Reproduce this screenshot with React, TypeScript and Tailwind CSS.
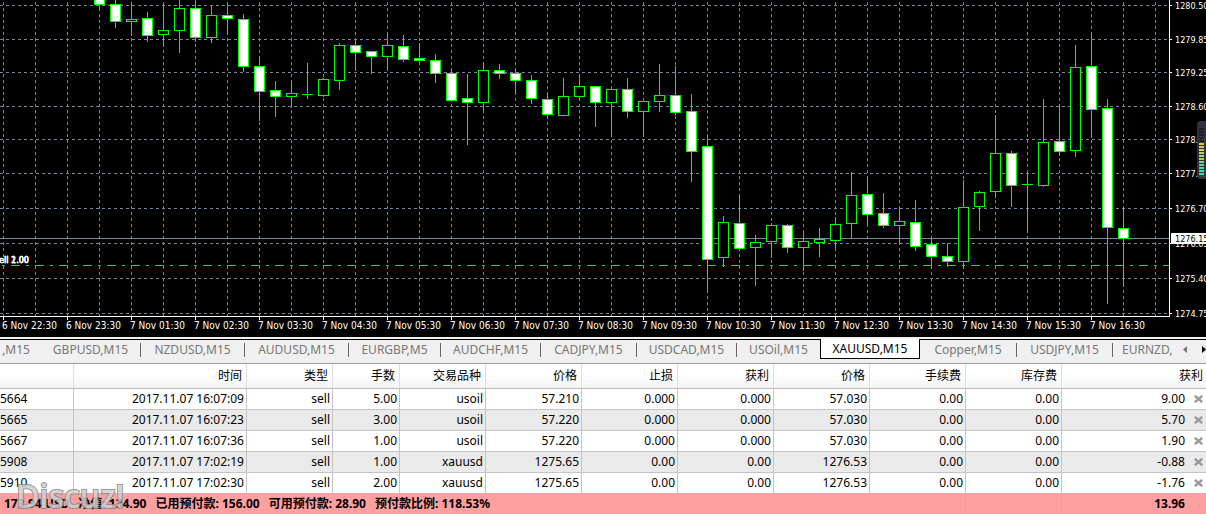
import { useState } from "react";
import clsx from "clsx";

// high, low, body top, body bottom, 1 = bear (filled)
const candles = [
  [-4, 10, -4, 5, 1],
  [-4, 28, 4, 22, 1],
  [2, 36, 19, 22, 0],
  [12, 42, 18, 36, 1],
  [3, 47, 30, 35, 0],
  [-4, 53, 8, 31, 0],
  [-4, 42, 8, 38, 1],
  [5, 43, 15, 38, 0],
  [3, 34, 15, 19, 1],
  [14, 72, 19, 67, 1],
  [56, 121, 66, 92, 1],
  [81, 117, 90, 97, 1],
  [82, 108, 93, 97, 0],
  [63, 99, 94, 95, 0],
  [78, 97, 79, 96, 0],
  [43, 90, 45, 81, 0],
  [40, 71, 45, 53, 1],
  [51, 74, 51, 57, 1],
  [32, 70, 45, 57, 0],
  [35, 62, 46, 60, 1],
  [43, 62, 58, 61, 1],
  [54, 83, 60, 74, 1],
  [69, 102, 73, 101, 1],
  [74, 145, 98, 103, 1],
  [63, 112, 70, 103, 0],
  [64, 79, 70, 74, 1],
  [69, 93, 73, 81, 1],
  [75, 104, 80, 99, 1],
  [93, 119, 99, 115, 1],
  [78, 116, 96, 116, 0],
  [75, 99, 86, 97, 0],
  [86, 127, 86, 103, 1],
  [89, 137, 89, 103, 0],
  [78, 118, 89, 112, 1],
  [101, 137, 101, 112, 0],
  [64, 112, 95, 102, 0],
  [66, 115, 95, 113, 1],
  [94, 182, 111, 152, 1],
  [136, 292, 146, 260, 1],
  [216, 267, 222, 258, 0],
  [195, 251, 223, 249, 1],
  [235, 286, 242, 248, 0],
  [223, 258, 225, 242, 0],
  [224, 253, 225, 248, 1],
  [233, 271, 241, 248, 0],
  [228, 257, 239, 243, 0],
  [217, 248, 224, 241, 0],
  [172, 239, 195, 224, 0],
  [177, 225, 194, 215, 1],
  [193, 228, 213, 226, 1],
  [208, 243, 221, 226, 0],
  [200, 251, 222, 247, 1],
  [238, 268, 244, 257, 1],
  [243, 267, 256, 262, 1],
  [180, 268, 207, 262, 0],
  [191, 231, 192, 207, 0],
  [115, 198, 153, 192, 0],
  [151, 207, 153, 186, 1],
  [173, 233, 184, 185, 0],
  [99, 187, 142, 186, 0],
  [104, 156, 141, 152, 1],
  [45, 157, 67, 151, 0],
  [33, 138, 66, 110, 1],
  [99, 304, 108, 228, 1],
  [208, 287, 228, 239, 1],
];

const prices = [
  { y: 5, label: "1280.50" },
  { y: 39, label: "1279.85" },
  { y: 72, label: "1279.25" },
  { y: 106, label: "1278.60" },
  { y: 139, label: "1278.00" },
  { y: 173, label: "1277.35" },
  { y: 208, label: "1276.70" },
  { y: 243, label: "1276.05" },
  { y: 278, label: "1275.40" },
  { y: 313, label: "1274.75" },
];

const times = [
  "6 Nov 22:30",
  "6 Nov 23:30",
  "7 Nov 01:30",
  "7 Nov 02:30",
  "7 Nov 03:30",
  "7 Nov 04:30",
  "7 Nov 05:30",
  "7 Nov 06:30",
  "7 Nov 07:30",
  "7 Nov 08:30",
  "7 Nov 09:30",
  "7 Nov 10:30",
  "7 Nov 11:30",
  "7 Nov 12:30",
  "7 Nov 13:30",
  "7 Nov 14:30",
  "7 Nov 15:30",
  "7 Nov 16:30",
];

const tabs = [
  { label: ",M15", width: "w-[41px]" },
  { label: "GBPUSD,M15", width: "w-[100px]" },
  { label: "NZDUSD,M15", width: "w-[104px]" },
  { label: "AUDUSD,M15", width: "w-[104px]" },
  { label: "EURGBP,M5", width: "w-[92px]" },
  { label: "AUDCHF,M15", width: "w-[100px]" },
  { label: "CADJPY,M15", width: "w-[96px]" },
  { label: "USDCAD,M15", width: "w-[100px]" },
  { label: "USOil,M15", width: "w-[83px]" },
  { label: "XAUUSD,M15", width: "w-[100px]" },
  { label: "Copper,M15", width: "w-[97px]" },
  { label: "USDJPY,M15", width: "w-[96px]" },
];

const columns = [
  { label: "", width: "w-[74px]" },
  { label: "时间", width: "w-[173px]" },
  { label: "类型", width: "w-[86px]" },
  { label: "手数", width: "w-[67px]" },
  { label: "交易品种", width: "w-[86px]" },
  { label: "价格", width: "w-[96px]" },
  { label: "止损", width: "w-[96px]" },
  { label: "获利", width: "w-[96px]" },
  { label: "价格", width: "w-[96px]" },
  { label: "手续费", width: "w-[96px]" },
  { label: "库存费", width: "w-[96px]" },
  { label: "获利", width: "w-auto" },
];

const orders = [
  ["5664", "2017.11.07 16:07:09", "sell", "5.00", "usoil", "57.210", "0.000", "0.000", "57.030", "0.00", "0.00", "9.00"],
  ["5665", "2017.11.07 16:07:23", "sell", "3.00", "usoil", "57.220", "0.000", "0.000", "57.030", "0.00", "0.00", "5.70"],
  ["5667", "2017.11.07 16:07:36", "sell", "1.00", "usoil", "57.220", "0.000", "0.000", "57.030", "0.00", "0.00", "1.90"],
  ["5908", "2017.11.07 17:02:19", "sell", "1.00", "xauusd", "1275.65", "0.00", "0.00", "1276.53", "0.00", "0.00", "-0.88"],
  ["5910", "2017.11.07 17:02:30", "sell", "2.00", "xauusd", "1275.65", "0.00", "0.00", "1276.53", "0.00", "0.00", "-1.76"],
];

const summary = [
  "173.94 USD",
  "净值: 134.90",
  "已用预付款: 156.00",
  "可用预付款: 28.90",
  "预付款比例: 118.53%",
];

const meter = [
  "bg-[#1c1e26]",
  "bg-[#1c1e26]",
  "bg-[#1c1e26]",
  "bg-[#1c1e26]",
  "bg-[#1c1e26]",
  "bg-[#e0c040]",
  "bg-[#dcc848]",
  "bg-[#d0d050]",
  "bg-[#c0d458]",
  "bg-[#a8d860]",
  "bg-[#90d870]",
  "bg-[#78d880]",
  "bg-[#60d890]",
  "bg-[#50d8a0]",
  "bg-[#44d8b0]",
  "bg-[#40d8b8]",
];

const Chart = () => (
  <svg
    className="block h-[337px] w-full bg-black font-['DejaVu_Sans_Condensed','Noto_Sans',sans-serif] text-[10px]"
    shapeRendering="crispEdges"
  >
    {/* grid */}
    <g stroke="#778899" strokeDasharray="3 3">
      {Array.from({ length: 37 }, (_, i) => (
        <line key={i} x1={3.5 + i * 32} x2={3.5 + i * 32} y1={2} y2={316} />
      ))}
      {prices.map(({ y }) => (
        <line key={y} x1={0} x2={1169} y1={y + 0.5} y2={y + 0.5} />
      ))}
    </g>
    <line x1={0} x2={1169} y1={238.5} y2={238.5} stroke="#778899" />
    <line x1={-13} x2={1169} y1={265.5} y2={265.5} stroke="#32cd32" strokeDasharray="9 6 3 6" />

    {candles.map(([high, low, top, bottom, bear], i) => {
      const x = 99 + i * 16;
      return (
        <g key={i} fill="#00ff00">
          <rect x={x} y={high} width={1} height={low - high} />
          <rect x={x - 5} y={top} width={11} height={bottom - top} />
          {bottom - top > 2 && (
            <rect
              x={x - 4}
              y={top + 1}
              width={9}
              height={bottom - top - 2}
              fill={bear ? "#ffffff" : "#000000"}
            />
          )}
        </g>
      );
    })}

    {/* axes */}
    <g fill="#ffffff">
      <rect x={1169} y={0} width={1} height={317} />
      <rect x={0} y={316} width={1170} height={1} />
      {prices.map(({ y, label }) => (
        <g key={y}>
          <rect x={1170} y={y} width={2} height={1} />
          <text x={1175} y={y + 4} className="text-[9px]">
            {label}
          </text>
        </g>
      ))}
      {times.map((label, i) => (
        <g key={label}>
          <rect x={3 + i * 64} y={317} width={1} height={3} />
          <text x={2 + i * 64} y={329}>
            {label}
          </text>
        </g>
      ))}
      <rect x={1171} y={233} width={400} height={11} />
      <g textAnchor="end" className="text-[9px]" stroke="#ffffff" strokeWidth={0.3}>
        <text x={29} y={263}>
          sell 1.00
        </text>
        <text x={29} y={263}>
          sell 2.00
        </text>
      </g>
    </g>
    <text x={1175} y={242} fill="#000000" className="text-[9px]">
      1276.15
    </text>
  </svg>
);

const Tabs = () => {
  const [active, setActive] = useState("XAUUSD,M15");

  return (
    <nav className="flex h-[27px] overflow-hidden border-b border-[#999] bg-[#f0f0f0] pt-[2px] text-[12px] leading-5 text-[#777]">
      <div className="flex h-5 w-full border-t border-black">
        {tabs.map(({ label, width }, i) => (
          <button
            key={label}
            onClick={() => setActive(label)}
            className={clsx(
              "shrink-0 whitespace-nowrap",
              width,
              i === 0 ? "pr-[11px] text-right" : "text-center",
              label === active
                ? "-mt-px h-5 border-x border-b border-black bg-white text-black"
                : "flex h-[19px] items-center",
            )}
          >
            {label === active ? (
              label
            ) : (
              <span
                className={clsx(
                  "h-[14px] flex-1 leading-[14px]",
                  tabs[i + 1]?.label !== active && i !== 0 && "border-r border-[#666]",
                )}
              >
                {label}
              </span>
            )}
          </button>
        ))}
        <button className="w-[70px] shrink-0 overflow-hidden pl-[9px] text-left whitespace-nowrap">
          EURNZD,
        </button>
        <div className="flex h-[18px] flex-1 items-center justify-between">
          <button aria-label="Scroll left">
            <svg width="4" height="7" fill="#777">
              <path d="M4 0v7L0 3.5z" />
            </svg>
          </button>
          <button aria-label="Scroll right">
            <svg width="4" height="7" fill="#000">
              <path d="M0 0v7l4-3.5z" />
            </svg>
          </button>
        </div>
      </div>
    </nav>
  );
};

const Orders = () => (
  <table className="w-full table-fixed border-separate border-spacing-0 text-right text-[12px] leading-5 whitespace-nowrap text-black">
    <thead>
      <tr className="bg-linear-to-b from-white from-40% to-[#f1f2f4]">
        {columns.map(({ label, width }, i) => (
          <th
            key={i}
            className={clsx(
              "h-[25px] border-b border-[#bbb] py-0 pl-0 font-normal",
              width,
              i < 11 ? "border-r border-r-[#ddd] pr-1" : "pr-[3px]",
            )}
          >
            {label}
          </th>
        ))}
      </tr>
    </thead>
    <tbody>
      {orders.map((order, row) => (
        <tr key={order[0]} className={row % 2 ? "bg-[#eaeaea]" : "bg-white"}>
          {order.map((value, i) => (
            <td
              key={i}
              className={clsx(
                "border-[#c4c4c4] p-0",
                row < 4 && "border-b",
                i === 0 && "text-left",
                i < 11 && "border-r pr-[2px]",
              )}
            >
              {i < 11 ? (
                value
              ) : (
                <div className="flex items-center justify-end gap-[9px] pr-[3px]">
                  {value}
                  <button aria-label="Close order">
                    <svg width="9" height="8" stroke="#999" strokeWidth="2.4">
                      <path d="M.8.8l7.4 6.4M8.2.8L.8 7.2" />
                    </svg>
                  </button>
                </div>
              )}
            </td>
          ))}
        </tr>
      ))}
    </tbody>
    <tfoot>
      <tr className="bg-[#ffa0a0] font-bold">
        <td colSpan={10} className="h-[21px] border-r border-[#e8a0a0] py-0 pr-0 pl-1">
          <div className="flex gap-[9px]">
            {summary.map((item) => (
              <span key={item}>{item}</span>
            ))}
          </div>
        </td>
        <td className="border-r border-[#e8a0a0] p-0" />
        <td className="py-0 pr-[21px] pl-0">13.96</td>
      </tr>
    </tfoot>
  </table>
);

const App = () => (
  <main className="relative overflow-hidden bg-white font-['Noto_Sans','Noto_Sans_CJK_SC',sans-serif]">
    <Chart />
    <Tabs />
    <div className="relative">
      <Orders />
      <div className="absolute bottom-0 left-4 font-['Open_Sans',sans-serif] text-[32px] leading-9 font-semibold text-[#cfcfcf] opacity-85 [-webkit-text-stroke:2px_#888888] [paint-order:stroke_fill]">
        Discuz!
      </div>
    </div>
    {/* volume meter docked at the screen edge */}
    <div className="absolute top-[121px] right-0 flex h-[58px] w-[9px] flex-col items-center gap-px rounded-l bg-[#343744]/90 pt-[7px]">
      {meter.map((color, i) => (
        <div key={i} className={clsx("h-[2px] w-[5px] shrink-0", color)} />
      ))}
    </div>
  </main>
);

export default App;
